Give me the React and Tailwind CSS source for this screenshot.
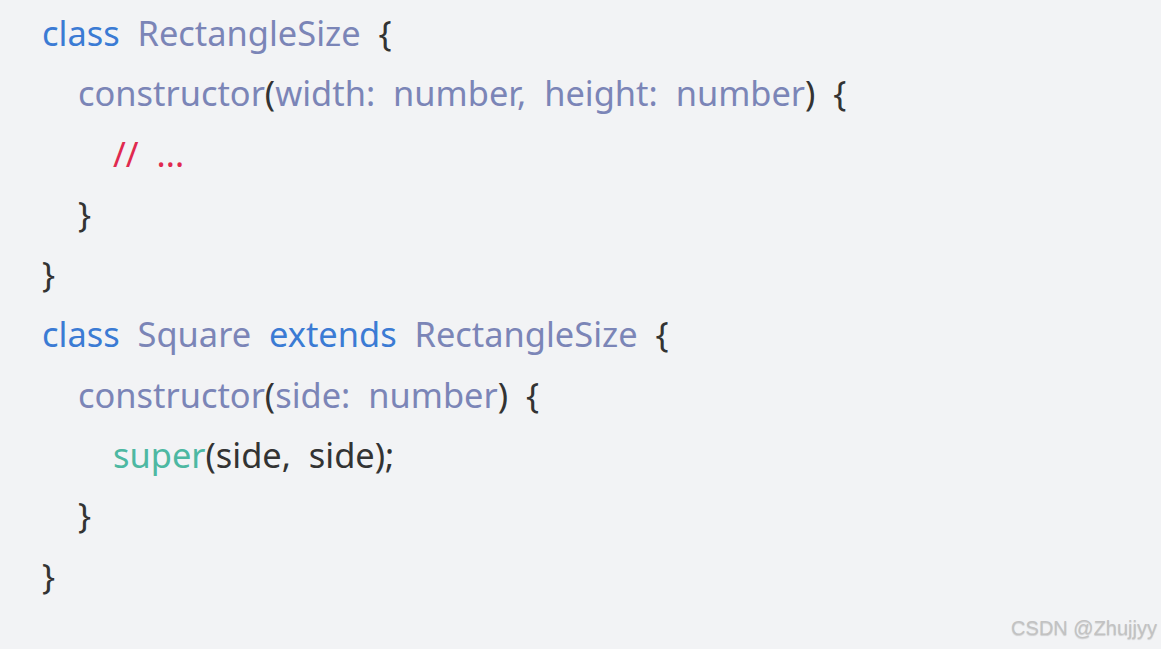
const kw = 'text-[#3b7bd4]';
const id = 'text-[#7b85b7]';
const pn = 'text-[#333333]';

const lines = [
  { indent: 0, parts: [['class', kw], [' ', pn], ['RectangleSize', id], [' {', pn]] },
  { indent: 1, parts: [['constructor', id], ['(', pn], ['width: number, height: number', id], [') {', pn]] },
  { indent: 2, parts: [['// ...', 'text-[#e0294f]']] },
  { indent: 1, parts: [['}', pn]] },
  { indent: 0, parts: [['}', pn]] },
  { indent: 0, parts: [['class', kw], [' ', pn], ['Square', id], [' ', pn], ['extends', kw], [' ', pn], ['RectangleSize', id], [' {', pn]] },
  { indent: 1, parts: [['constructor', id], ['(', pn], ['side: number', id], [') {', pn]] },
  { indent: 2, parts: [['super', 'text-[#4db8a2]'], ['(side, side);', pn]] },
  { indent: 1, parts: [['}', pn]] },
  { indent: 0, parts: [['}', pn]] },
];

const pads = ['pl-[42px]', 'pl-[78px]', 'pl-[113px]'];

export default function App() {
  return (
    <div className="w-[1161px] h-[649px] bg-[#f2f3f5] flex flex-col overflow-hidden relative font-['Noto_Sans',sans-serif]">
      <div className="pt-[3px] flex flex-col">
        {lines.map((l, i) => (
          <div key={i} className={`${pads[l.indent]} h-[60.3px] leading-[60px] text-[34.4px] whitespace-pre [word-spacing:9px]`}>
            {l.parts.map(([t, c], j) => (
              <span key={j} className={c}>{t}</span>
            ))}
          </div>
        ))}
      </div>
      <div className="absolute right-[4px] bottom-[6px] text-[20px] text-[#c2c2c2] font-['Liberation_Sans',sans-serif] [text-shadow:0_1px_1px_rgba(0,0,0,0.15)]">
        CSDN @Zhujjyy
      </div>
    </div>
  );
}
